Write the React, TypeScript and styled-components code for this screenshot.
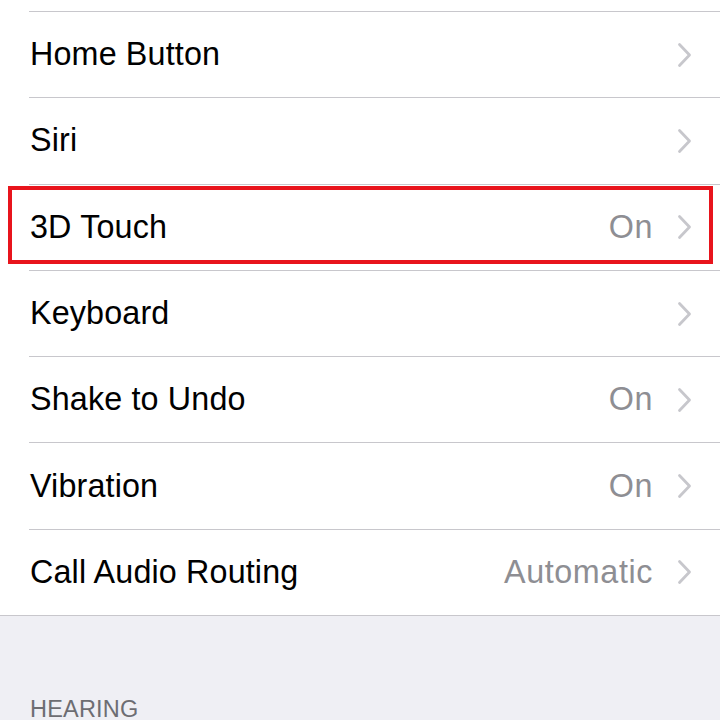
import React from "react"
import styled, { createGlobalStyle } from "styled-components"

const GlobalStyle = createGlobalStyle`
  html, body {
    margin: 0;
    padding: 0;
    background: #ffffff;
    overflow: hidden;
  }
  body {
    font-family: "Liberation Sans", Arial, sans-serif;
    -webkit-font-smoothing: antialiased;
  }
`

const Screen = styled.div`
  width: 720px;
  height: 720px;
  overflow: hidden;
  display: flex;
  flex-direction: column;
  background: #efeff4;
`

const List = styled.div`
  background: #ffffff;
  padding-top: 11px;
  display: flex;
  flex-direction: column;
  border-bottom: 1px solid #c8c7cc;
`

const Separator = styled.div`
  height: 1px;
  margin-left: 29px;
  background: #c8c7cc;
`

const Row = styled.div`
  position: relative;
  height: 85.3px;
  display: flex;
  align-items: center;
  padding: 0 28px 0 30px;
`

const Label = styled.span`
  flex: 1;
  font-size: 32.3px;
  letter-spacing: 0.15px;
  color: #000000;
  white-space: nowrap;
`

const Value = styled.span`
  font-size: 32.3px;
  letter-spacing: 0.6px;
  color: #8e8e93;
  margin-right: 24px;
  white-space: nowrap;
`

const Highlight = styled.div`
  position: absolute;
  top: 1px;
  left: 8px;
  right: 7px;
  bottom: 6px;
  border: 4px solid #e8141c;
  pointer-events: none;
`

const SectionHeader = styled.div`
  padding: 82px 0 0 30px;
  font-size: 23.5px;
  line-height: 1;
  color: #6d6d72;
  letter-spacing: 0.2px;
`

const Chevron: React.FC = () => (
  <svg width="15" height="26" viewBox="0 0 15 26" fill="none">
    <polyline
      points="2.5,2.5 12.5,13 2.5,23.5"
      stroke="#c7c7cc"
      strokeWidth="2.8"
      strokeLinecap="round"
      strokeLinejoin="round"
    />
  </svg>
)

type Item = { label: string; value?: string; highlighted?: boolean }

const items: Item[] = [
  { label: "Home Button" },
  { label: "Siri" },
  { label: "3D Touch", value: "On", highlighted: true },
  { label: "Keyboard" },
  { label: "Shake to Undo", value: "On" },
  { label: "Vibration", value: "On" },
  { label: "Call Audio Routing", value: "Automatic" },
]

const App: React.FC = () => {
  return (
    <Screen>
      <GlobalStyle />
      <List>
        {items.map(item => (
          <React.Fragment key={item.label}>
            <Separator />
            <Row>
              <Label>{item.label}</Label>
              {item.value && <Value>{item.value}</Value>}
              <Chevron />
              {item.highlighted && <Highlight />}
            </Row>
          </React.Fragment>
        ))}
      </List>
      <SectionHeader>HEARING</SectionHeader>
    </Screen>
  )
}

export default App
